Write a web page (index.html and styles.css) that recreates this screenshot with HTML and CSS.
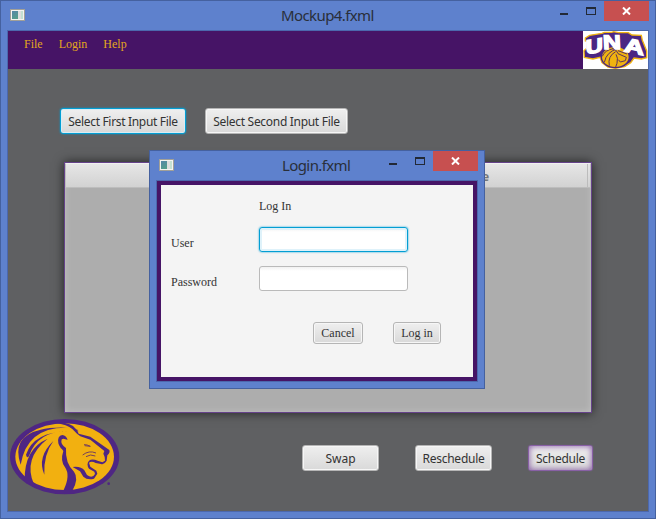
FILE: index.html
```html
<!DOCTYPE html>
<html lang="en">
<head>
<meta charset="utf-8">
<title>Mockup4.fxml</title>
<link rel="stylesheet" href="styles.css">
</head>
<body>
<div class="window main-window">
  <header class="titlebar">
    <span class="app-icon"><i></i></span>
    <h1 class="title">Mockup4.fxml</h1>
    <div class="controls">
      <span class="min"></span><span class="max"></span>
      <span class="close"><svg width="9" height="8" viewBox="0 0 9 8"><path d="M1 .5 8 7.5M8 .5 1 7.5"/></svg></span>
    </div>
  </header>
  <main class="client">
    <nav class="menubar">
      <span>File</span><span>Login</span><span>Help</span>
      <svg class="una" width="65" height="38" viewBox="15 15 195 114">
        <path class="badge" d="M22 36 35 28 72 22 79 19 101 19 107 17 122 20 151 20 162 27 190 28 193 43 206 75 206 95 190 99 168 96 158 110 140 122 112 127 90 123 72 110 66 94 45 99 19 94 18 74 27 66 29 46 22 45Z"/>
        <ellipse class="ball" cx="112" cy="93" rx="42" ry="32"/>
        <path class="seams" d="M73 91Q80 72 107 68M79 109Q85 77 120 68M94 119Q88 91 113 77M103 67Q118 72 120 83L145 94 142 104 127 108 121 101M114 85Q121 95 117 112L113 123M120 74 147 84"/>
        <g class="letters">
          <text transform="translate(23 85) rotate(-9) skewX(-9)" textLength="52" lengthAdjust="spacingAndGlyphs">U</text>
          <text transform="translate(76 70) skewX(3)" textLength="54" lengthAdjust="spacingAndGlyphs">N</text>
          <text transform="translate(137 76) rotate(12) skewX(6)" textLength="61" lengthAdjust="spacingAndGlyphs">A</text>
        </g>
      </svg>
    </nav>
    <section class="inputs">
      <button class="btn focused first">Select First Input File</button>
      <button class="btn second">Select Second Input File</button>
    </section>
    <section class="table">
      <div class="thead"><span>e</span></div>
    </section>
    <footer class="footer">
      <svg class="lion" width="110" height="76" viewBox="29 26 330 228">
        <ellipse class="purple" cx="193" cy="139" rx="164" ry="113"/>
        <ellipse class="gold" cx="193" cy="139" rx="148" ry="100"/>
        <path class="purple" d="M166 38Q210 34 226 55L237 65 229 56 235 70 270 79 327 119Q330 128 321 135L319 151Q311 165 302 161L286 158Q274 151 266 157L270 169 288 181 291 190 281 205Q261 210 249 199L239 183 217 170Q242 167 252 180L260 194Q276 206 284 191L282 184 266 175Q257 161 266 151 275 144 292 151L306 156 314 151 313 140 309 130 312 122 270 88 240 78 230 70 216 56Q200 43 166 38Z"/>
        <path class="purple" d="M201 52Q80 49 61 163 32 78 121 58 151 50 201 52ZM203 63Q112 62 86 137 80 146 77 133 100 65 203 63Z"/>
        <path class="purple" d="M142 85Q67 145 101 222L109 235 73 211Q71 115 142 85ZM159 92Q129 133 132 193 109 140 159 92Z"/>
        <path class="purple" d="M201 90Q189 78 179 82 171 96 183 114L189 122Q179 152 194 171 211 195 190 239L217 239Q236 204 221 184 194 159 197 113 180 101 183 88 190 81 201 90ZM186 74Q170 76 174 99 178 113 191 122L195 116Q180 101 184 86 191 82 202 89 198 76 186 74Z"/>
        <path class="line" d="M251 103Q259 102 270 108L253 106M247 134Q266 119 287 128M257 139Q270 130 285 137"/>
        <circle class="purple" cx="325" cy="220" r="4"/>
      </svg>
      <button class="btn swap">Swap</button>
      <button class="btn resched">Reschedule</button>
      <button class="btn sched">Schedule</button>
    </footer>
  </main>
</div>

<div class="window dialog">
  <header class="titlebar">
    <span class="app-icon"><i></i></span>
    <h2 class="title">Login.fxml</h2>
    <div class="controls">
      <span class="min"></span><span class="max"></span>
      <span class="close"><svg width="9" height="8" viewBox="0 0 9 8"><path d="M1 .5 8 7.5M8 .5 1 7.5"/></svg></span>
    </div>
  </header>
  <form class="client login">
    <p class="heading">Log In</p>
    <label for="user">User</label><input id="user" class="field active" type="text">
    <label for="pass">Password</label><input id="pass" class="field" type="password">
    <div class="actions">
      <button class="btn serif cancel" type="button">Cancel</button>
      <button class="btn serif ok" type="button">Log in</button>
    </div>
  </form>
</div>
</body>
</html>
```
FILE: styles.css
```css
* { box-sizing: border-box; }
body {
  margin: 0;
  width: 656px;
  height: 520px;
  overflow: hidden;
  position: relative;
  font: 12px/16px "Noto Sans", sans-serif;
  color: #333;
}
.window {
  background: #5e81cd;
  border: 1px solid #45619f;
  display: flex;
  flex-direction: column;
}
.main-window { width: 656px; height: 519px; padding: 0 6px 6px; }
.dialog {
  position: absolute;
  left: 149px;
  top: 150px;
  width: 336px;
  height: 239px;
  padding: 0 6px 6px;
}
.titlebar {
  height: 29px;
  flex: none;
  display: flex;
  position: relative;
}
.app-icon {
  width: 15px;
  height: 12px;
  margin: 8px 0 0 3px;
  border: 1px solid #a2a098;
  background: #f3f3f1;
  padding: 1px;
  display: flex;
}
.app-icon i {
  width: 11px;
  height: 8px;
  background: linear-gradient(90deg, transparent 6px, #ddd 6px 9px, #c3dfd2 9px), linear-gradient(150deg, #5586a8, #54a780);
}
.title {
  flex: 1;
  margin: 4px 0 0;
  font-size: 15px;
  line-height: 20px;
  font-weight: 400;
  color: #292f3a;
}
.main-window .title { padding-left: 256px; letter-spacing: -.6px; }
.dialog .title { padding-left: 108px; letter-spacing: -.6px; }
.controls { display: flex; }
.min { width: 8px; height: 2px; margin: 12px 18px 0 0; background: #222936; }
.max { width: 10px; height: 8px; margin: 6px 8px 0 0; border: 1px solid #222936; border-top-width: 2px; }
.close {
  width: 45px;
  height: 20px;
  background: #c75050;
  display: flex;
  align-items: center;
  justify-content: center;
}
.close path { stroke: #fff; stroke-width: 2; fill: none; }
.client {
  flex: 1;
  border: 1px solid #4c68ad;
  display: flex;
  flex-direction: column;
  min-height: 0;
}
.main-window .client { background: #5f6062; }
.menubar {
  height: 38px;
  flex: none;
  background: #461466;
  color: #e3a71c;
  display: flex;
  gap: 16px;
  padding: 5px 0 0 16px;
  font-family: "Liberation Serif", serif;
}
.una { margin: -5px 0 0 auto; background: #fff; display: block; }
.badge { fill: #4b2683; stroke: #f0b310; stroke-width: 4; }
.ball { fill: #f0b310; stroke: #4b2683; stroke-width: 4; }
.seams { fill: none; stroke: #5b315f; stroke-width: 3; }
.letters text { font: 700 59px "Liberation Sans", sans-serif; fill: #fff; stroke: #fff; stroke-width: 4; }
.inputs { display: flex; gap: 19px; padding: 39px 0 0 52px; }
.btn {
  height: 26px;
  padding: 0;
  border: 1px solid #b5b5b5;
  border-radius: 3px;
  background: linear-gradient(#efefef, #d9d9d9);
  box-shadow: inset 0 0 0 1px #f6f6f6;
  font: 12px/16px "Noto Sans", sans-serif;
  color: #333;
  white-space: nowrap;
}
.inputs .btn { padding-top: 1px; }
.first { width: 126px; letter-spacing: -.32px; }
.second { width: 143px; letter-spacing: -.3px; }
.focused { border-color: #039ed3; box-shadow: 0 0 2px #039ed3, inset 0 0 0 1px #d8edf5; }
.table {
  width: 528px;
  height: 251px;
  margin: 28px 0 0 56px;
  border: 1px solid #65428a;
  background: #adadad;
  box-shadow: 0 0 10px rgba(0, 0, 0, .65), inset 0 0 7px rgba(255, 255, 255, .25);
}
.thead {
  height: 25px;
  border: 1px solid #bdbdbd;
  border-top-color: #f0f0f0;
  background: linear-gradient(90deg, transparent 521px, #bcbcbc 521px 522px, transparent 522px), linear-gradient(#e6e6e6, #d2d2d2);
  padding: 5px 0 0 416px;
  font-weight: 700;
  color: #777;
}
.footer { display: flex; align-items: flex-start; padding: 6px 0 0 2px; }
.lion { display: block; flex: none; }
.purple { fill: #4f2683; }
.gold { fill: #f2b010; }
.line { fill: none; stroke: #74405c; stroke-width: 3; }
.footer .btn { margin-top: 26px; padding-top: 1px; }
.swap { width: 77px; margin-left: 182px; }
.resched { width: 77px; margin-left: 36px; letter-spacing: -.25px; }
.sched { width: 65px; margin-left: 36px; letter-spacing: -.25px; border-color: #8860a5; }
.footer .sched { box-shadow: inset 0 0 6px #8051a0, 0 0 1px #8860a5; }
.dialog .login {
  display: grid;
  grid-template-columns: 88px 149px;
  grid-template-rows: 42px 39px 56px 22px;
  align-content: start;
  padding: 4px 0 0 14px;
  background: #f4f4f4;
  box-shadow: inset 0 0 0 4px #461466;
  font-family: "Liberation Serif", serif;
}
.heading { grid-column: 2; margin: 13px 0 0; }
.login label { padding-top: 8px; }
.field {
  width: 149px;
  height: 25px;
  border: 1px solid #bababa;
  border-radius: 3px;
  background: linear-gradient(#f1f1f1, #fff 4px);
  outline: none;
  padding: 3px 7px;
}
.active { border-color: #039ed3; box-shadow: 0 0 2px #039ed3, inset 0 0 0 2px #dff2fa; }
.actions { grid-column: 2; display: flex; gap: 30px; padding-left: 54px; }
.btn.serif { height: 22px; flex: none; font-family: "Liberation Serif", serif; }
.cancel { width: 50px; }
.ok { width: 48px; }
```
